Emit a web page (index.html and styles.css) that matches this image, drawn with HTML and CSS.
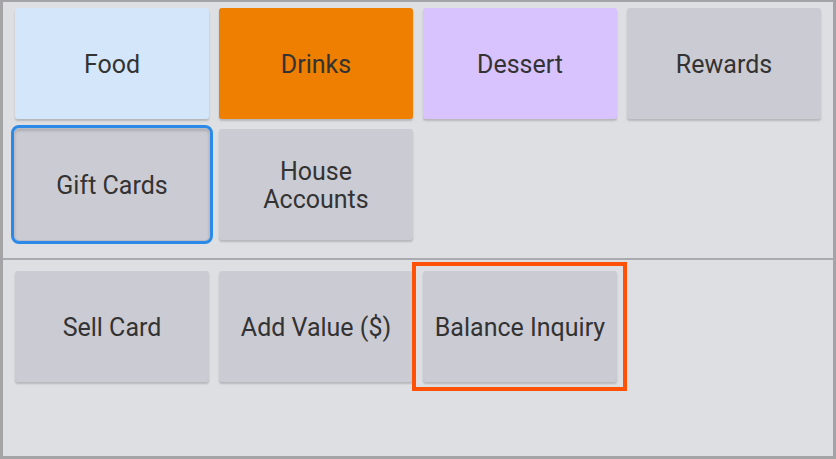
FILE: index.html
```html
<!doctype html>
<html lang="en">
<head>
  <meta charset="UTF-8">
  <title>Register Menu</title>
  <link rel="stylesheet" href="styles.css">
</head>
<body>
  <div class="panel">
    <div class="section categories">
      <button class="tile food" type="button">Food</button>
      <button class="tile drinks" type="button">Drinks</button>
      <button class="tile dessert" type="button">Dessert</button>
      <button class="tile" type="button">Rewards</button>
      <button class="tile selected" type="button">Gift Cards</button>
      <button class="tile" type="button">House<br>Accounts</button>
    </div>
    <div class="section actions">
      <button class="tile" type="button">Sell Card</button>
      <button class="tile" type="button">Add Value ($)</button>
      <div class="spot">
        <button class="tile" type="button">Balance Inquiry</button>
        <span class="highlight"></span>
      </div>
    </div>
  </div>
</body>
</html>
```

FILE: styles.css
```css
body {
  margin: 0px;
  padding: 0px;
  background-color: #dedfe3;
  font-family: Roboto, 'Noto Sans', sans-serif;
}

.panel {
  width: 836px;
  height: 459px;
  box-sizing: border-box;
  border-style: solid;
  border-color: #a4a4a6;
  border-width: 2px 3px 3px 3px;
  background-color: #dedfe3;
}

.section {
  display: grid;
  grid-template-columns: repeat(4, 194px);
  grid-auto-rows: 111px;
  column-gap: 10px;
  row-gap: 10px;
  padding-left: 12px;
}

.categories {
  padding-top: 6px;
  padding-bottom: 18px;
  border-bottom: solid 2px #aaabb0;
}

.actions {
  padding-top: 11px;
}

.tile {
  margin: 0px;
  padding: 3px 0px 0px;
  width: 100%;
  height: 100%;
  border: none;
  border-radius: 3px;
  background-color: #cbcbd3;
  color: #333333;
  font-family: Roboto, 'Noto Sans', sans-serif;
  font-size: 25px;
  line-height: 28px;
  box-shadow: 0px 2px 2px rgba(0, 0, 0, 0.18);
}

.food {
  background-color: #d4e6f9;
}

.drinks {
  background-color: #ee7f00;
}

.dessert {
  background-color: #d9c3fe;
}

.selected {
  border-radius: 4px;
  outline: solid 3px #2b8ae8;
  outline-offset: 1px;
  box-shadow: 0px 0px 0px 1px #b9bac3, inset 0px 2px 3px rgba(0, 0, 0, 0.15);
}

.spot {
  position: relative;
}

.highlight {
  position: absolute;
  top: -9px;
  left: -11px;
  right: -10px;
  bottom: -9px;
  border: solid 4px #ff5206;
  pointer-events: none;
}
```
